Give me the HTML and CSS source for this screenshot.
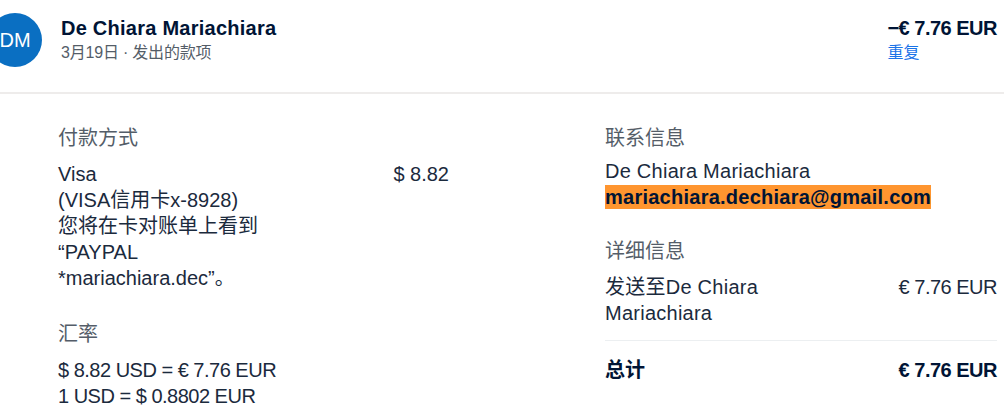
FILE: index.html
```html
<!DOCTYPE html>
<html lang="zh-CN">
<head>
    <meta charset="UTF-8">
    <title>交易详情</title>
    <link rel="stylesheet" href="styles.css">
</head>
<body>
    <div class="header">
        <div class="avatar">DM</div>
        <div class="who">
            <div class="name">De Chiara Mariachiara</div>
            <div class="sub">3月19日 · 发出的款项</div>
        </div>
        <div class="amount">
            <div class="total num">−€ 7.76 EUR</div>
            <a class="repeat" href="#">重复</a>
        </div>
    </div>

    <div class="content">
        <div class="col">
            <div class="section">
                <div class="title">付款方式</div>
                <div class="row">
                    <div>Visa<br>(VISA信用卡x-8928)<br>您将在卡对账单上看到<br>“PAYPAL<br>*mariachiara.dec”。</div>
                    <div>$ 8.82</div>
                </div>
            </div>
            <div class="section">
                <div class="title">汇率</div>
                <div class="num">$ 8.82 USD = € 7.76 EUR</div>
                <div class="num">1 USD = $ 0.8802 EUR</div>
            </div>
        </div>

        <div class="col right">
            <div class="section">
                <div class="title">联系信息</div>
                <div class="text">De Chiara Mariachiara</div>
                <div><span class="mail">mariachiara.dechiara@gmail.com</span></div>
            </div>
            <div class="section">
                <div class="title">详细信息</div>
                <div class="row">
                    <div class="text">发送至De Chiara<br>Mariachiara</div>
                    <div class="num">€ 7.76 EUR</div>
                </div>
                <div class="row sum">
                    <div>总计</div>
                    <div class="num">€ 7.76 EUR</div>
                </div>
            </div>
        </div>
    </div>
</body>
</html>
```

FILE: styles.css
```css
body {
    margin: 0;
    font-family: "Liberation Sans", Arial, "Noto Sans CJK SC", sans-serif;
    color: #1b2a3d;
    background-color: white;
    overflow: hidden;
}

.header {
    display: flex;
    align-items: flex-start;
    height: 92px;
    padding-right: 7px;
    border-bottom: 2px solid #eeeceb;
}

.avatar {
    flex: none;
    width: 54px;
    height: 54px;
    margin: 13px 0 0 -12px;
    border-radius: 50%;
    background-color: #0a6fc2;
    color: white;
    font-size: 20px;
    display: flex;
    align-items: center;
    justify-content: center;
}

.who {
    flex: 1;
    margin: 16px 0 0 19px;
}

.name, .total {
    font-size: 20px;
    line-height: 24px;
    font-weight: bold;
    color: #001435;
}

.name, .text, .mail {
    letter-spacing: 0.25px;
}

.num {
    letter-spacing: -0.5px;
}

.sub {
    margin-top: 3px;
    font-size: 16px;
    line-height: 20px;
    color: #545d68;
    letter-spacing: -0.2px;
}

.amount {
    margin-top: 16px;
}

.repeat {
    display: block;
    margin-top: 3px;
    font-size: 16px;
    line-height: 20px;
    color: #1a73e8;
    text-decoration: none;
}

.content {
    display: grid;
    grid-template-columns: 391px 392px;
    column-gap: 156px;
    padding: 31px 7px 0 58px;
    font-size: 20px;
    line-height: 26px;
}

.title {
    color: #545d68;
    margin-bottom: 10px;
}

.section + .section {
    margin-top: 30px;
}

.right .section:first-child .title {
    margin-bottom: 7px;
}

.right .section + .section {
    margin-top: 28px;
}

.row {
    display: flex;
    justify-content: space-between;
}

.mail {
    font-weight: bold;
    color: #001435;
    background-color: #ff952f;
    padding: 1px 0;
}

.sum {
    margin-top: 14px;
    padding-top: 16px;
    border-top: 1px solid #eceff1;
    font-weight: bold;
    color: #001435;
}
```
